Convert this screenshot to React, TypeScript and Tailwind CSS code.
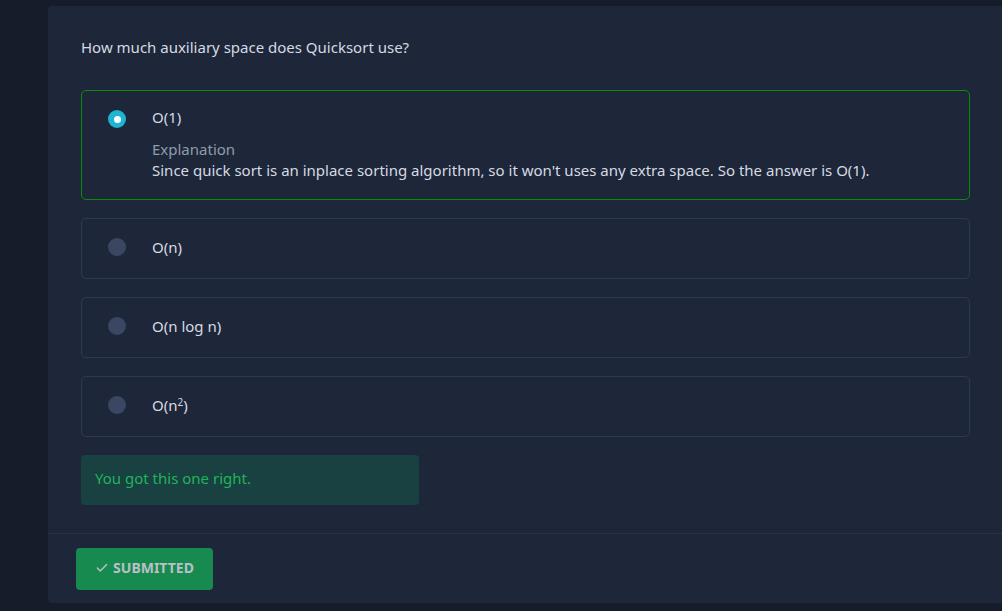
import React from 'react';
import { Check } from 'lucide-react';

type Option = { id: string; label: React.ReactNode; explanation?: string };

const OPTIONS: Option[] = [
  {
    id: 'a',
    label: 'O(1)',
    explanation:
      "Since quick sort is an inplace sorting algorithm, so it won't uses any extra space. So the answer is O(1).",
  },
  { id: 'b', label: 'O(n)' },
  { id: 'c', label: 'O(n log n)' },
  {
    id: 'd',
    label: (
      <>
        O(n<sup className="text-[10px]">2</sup>)
      </>
    ),
  },
];

function Radio({ checked }: { checked: boolean }) {
  if (checked) {
    return (
      <span className="w-[18px] h-[18px] rounded-full bg-[#1eb4d4] flex items-center justify-center shrink-0">
        <span className="block w-[7px] h-[7px] rounded-full bg-white" />
      </span>
    );
  }
  return <span className="block w-[18px] h-[18px] rounded-full bg-[#3b4762] shrink-0" />;
}

export default function App() {
  const selected = 'a';

  return (
    <div
      className="min-h-[611px] bg-[#161c2a] pt-[6px] pl-[48px] pb-[8px]"
      style={{ fontFamily: '"Noto Sans", "Open Sans", sans-serif' }}
    >
      <div className="bg-[#1e2739] rounded-tl-[4px] rounded-bl-[4px] min-h-[597px] flex flex-col">
        <div className="pl-[33px] pr-[32px] pt-[31px] pb-[28px] flex-1">
          <p className="text-[15px] leading-[21px] text-[#d5dae2]">
            How much auxiliary space does Quicksort use?
          </p>

          <div className="mt-[32px] flex flex-col gap-[18px]">
            {OPTIONS.map((opt) => {
              const isSel = opt.id === selected;
              return (
                <div
                  key={opt.id}
                  className={`rounded-[5px] border flex pl-[26px] pr-[25px] ${
                    isSel
                      ? 'border-[#0b8a0b] pt-[16px] pb-[18px]'
                      : 'border-[#2d3a57] h-[61px] items-center pb-[3px]'
                  }`}
                >
                  <div className={isSel ? 'pt-[3px]' : ''}>
                    <Radio checked={isSel} />
                  </div>
                  <div className="ml-[26px] text-[#d5dae2]">
                    <div className="text-[15px] leading-[21px]">{opt.label}</div>
                    {opt.explanation && (
                      <div className="mt-[11px]">
                        <div className="text-[15px] leading-[21px] text-[#8f9aad]">Explanation</div>
                        <div className="text-[15px] leading-[21px] text-[#d5dae2]">{opt.explanation}</div>
                      </div>
                    )}
                  </div>
                </div>
              );
            })}
          </div>

          <div className="mt-[18px] w-[338px] h-[50px] rounded-[4px] bg-[#1a4141] flex items-center px-[14px] pb-[4px]">
            <span className="text-[15px] text-[#1fb45a]">You got this one right.</span>
          </div>
        </div>

        <div className="border-t border-[#283248] px-[28px] pt-[14px] pb-[13px]">
          <button
            type="button"
            className="h-[42px] w-[137px] rounded-[4px] bg-[#168a4f] flex items-center justify-center gap-[4px] pb-[3px] text-[#b9c1c9] text-[14px] font-bold"
          >
            <Check size={14} strokeWidth={2.5} />
            SUBMITTED
          </button>
        </div>
      </div>
    </div>
  );
}
